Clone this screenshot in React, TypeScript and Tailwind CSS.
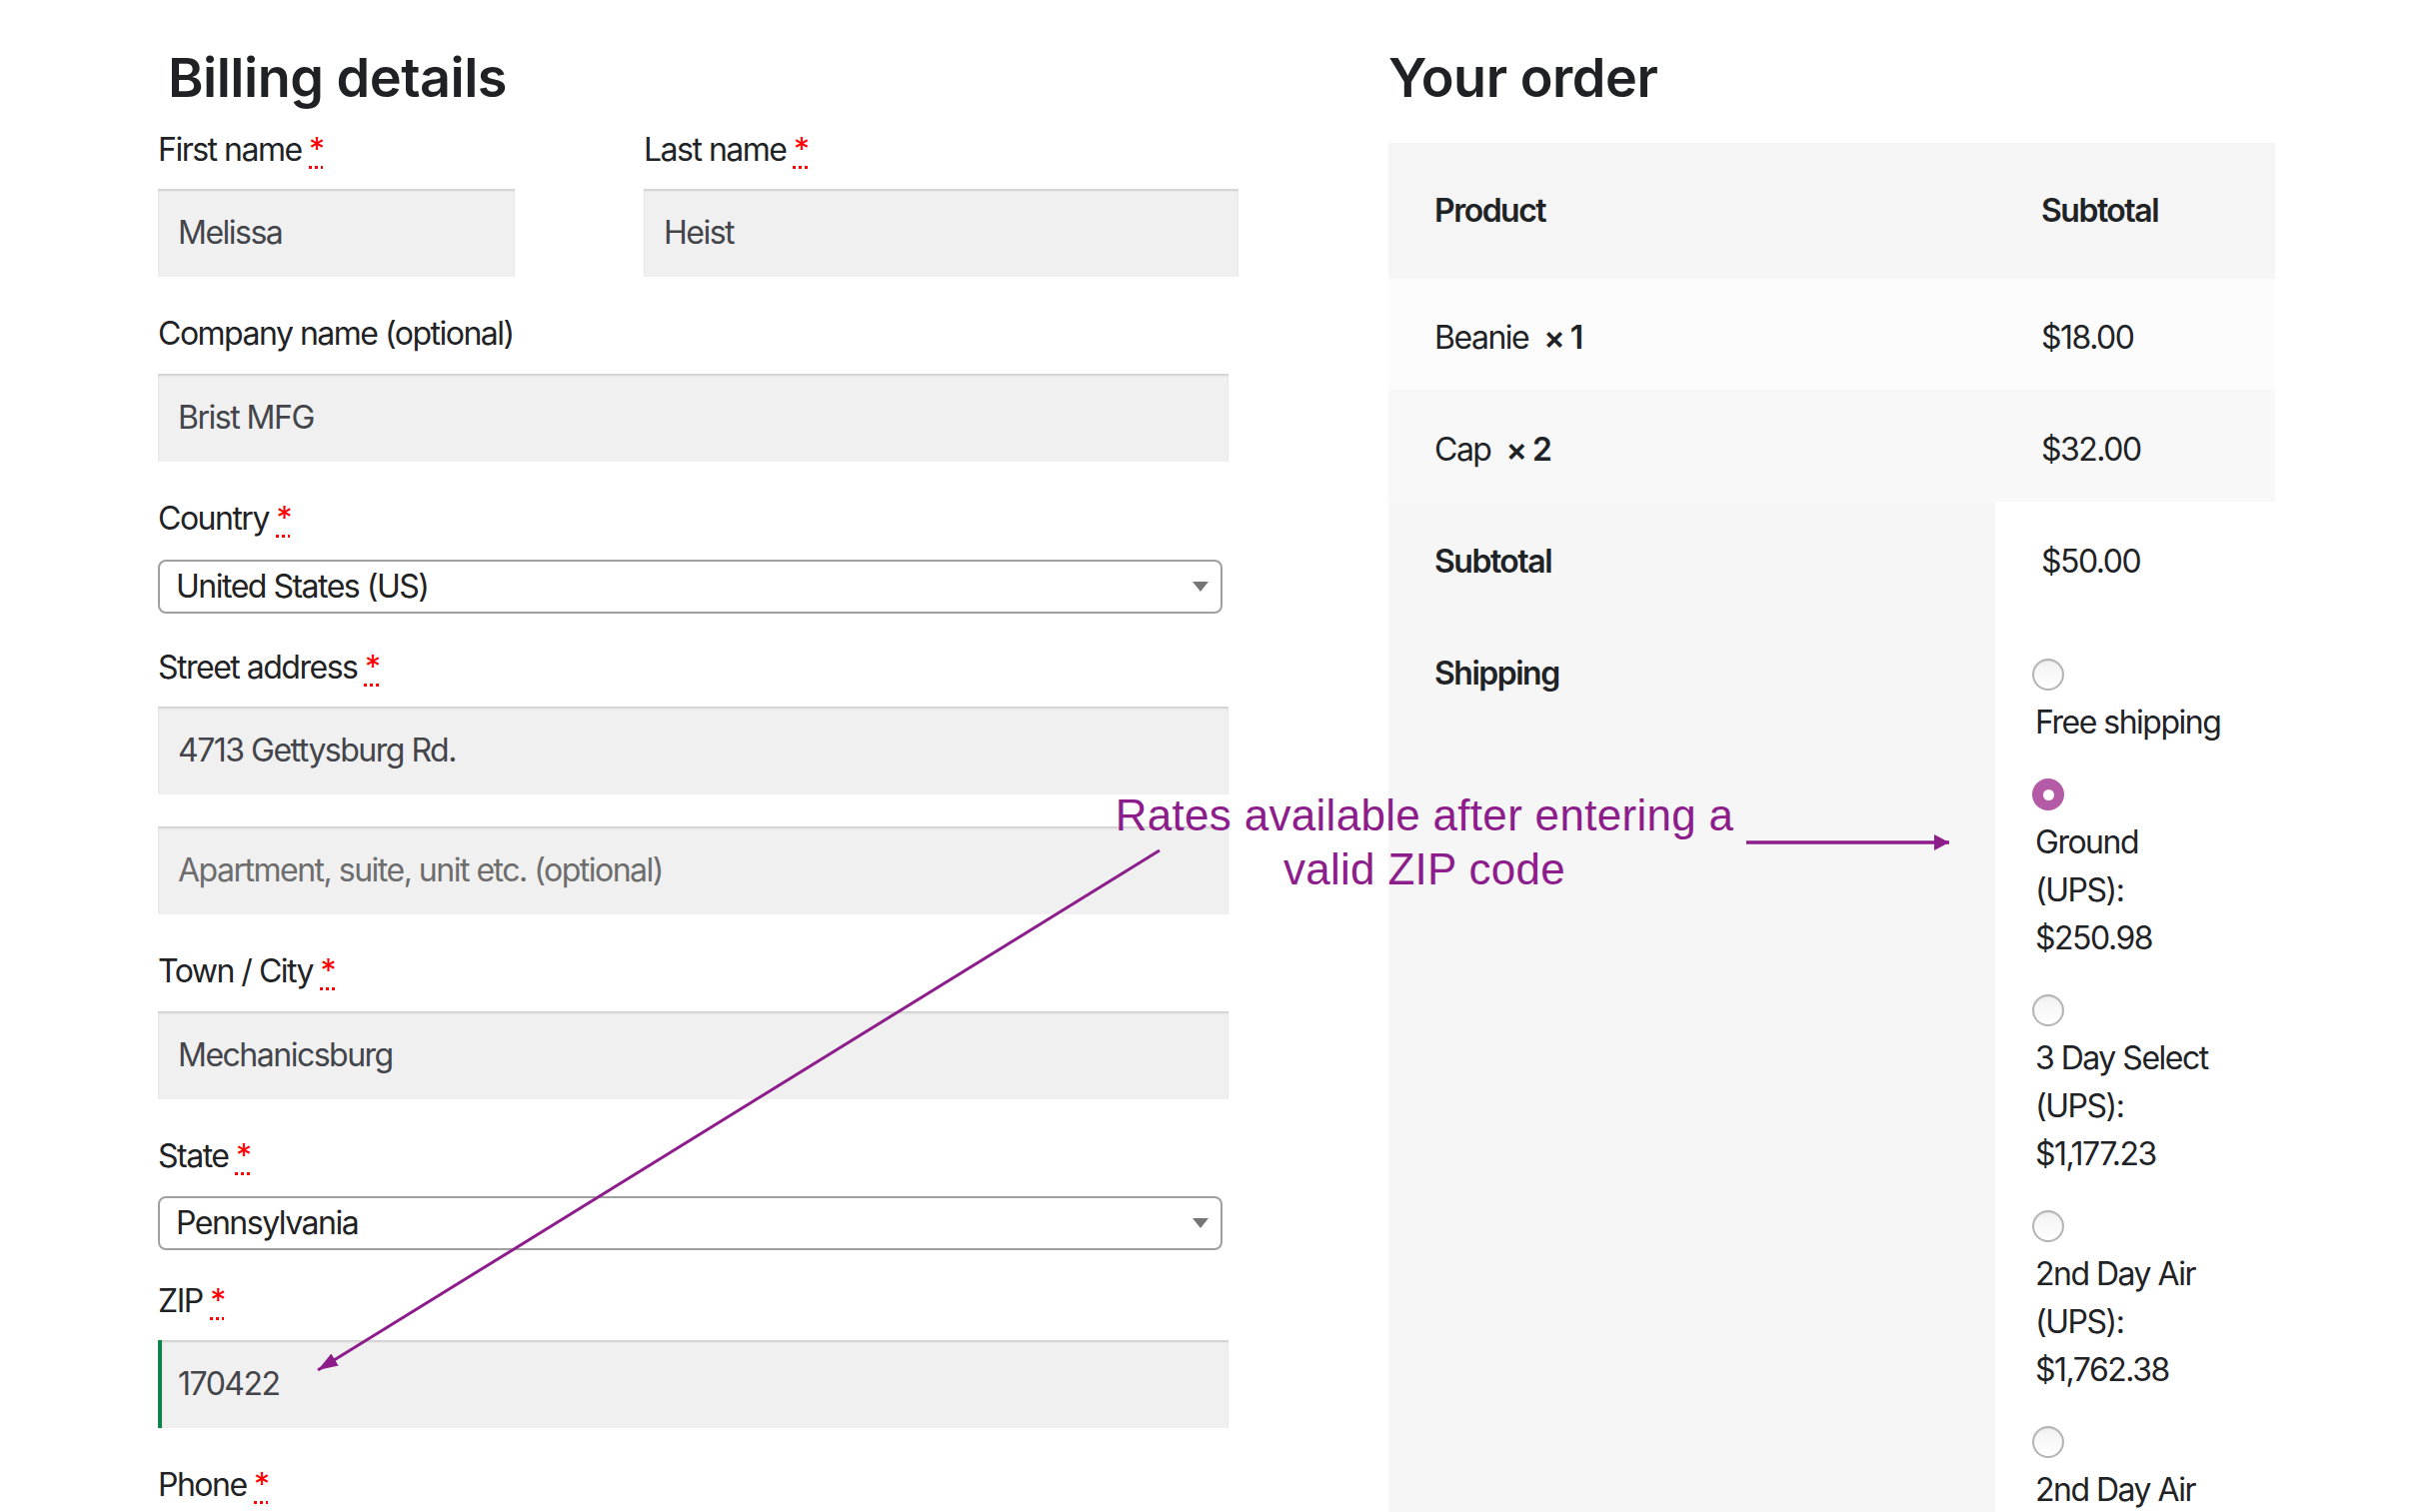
import React from "react";

function Req() {
  return (
    <abbr
      title="required"
      className="text-[#ff0000] underline decoration-dotted decoration-[3px] underline-offset-[5px]"
    >
      *
    </abbr>
  );
}

function Label({ children, req = true }: { children: React.ReactNode; req?: boolean }) {
  return (
    <div className="h-12 leading-[48px] text-[32px] text-[#1f2326] whitespace-nowrap">
      {children}
      {req ? (
        <>
          {" "}
          <Req />
        </>
      ) : null}
    </div>
  );
}

function Input({
  value,
  placeholder,
  valid,
  className = "",
}: {
  value?: string;
  placeholder?: string;
  valid?: boolean;
  className?: string;
}) {
  return (
    <div
      className={
        "h-[88px] flex items-center bg-[#f0f0f0] shadow-[inset_0_2px_2px_rgba(0,0,0,0.13)] text-[32px] " +
        (valid ? "border-l-4 border-[#0f834d] pl-[16px] " : "pl-[20px] ") +
        className
      }
    >
      {value ? (
        <span className="text-[#43454b]">{value}</span>
      ) : (
        <span className="text-[#6d6d6d]">{placeholder}</span>
      )}
    </div>
  );
}

function Select({ value, className = "" }: { value: string; className?: string }) {
  return (
    <div
      className={
        "h-[54px] flex items-center justify-between border-2 border-[#a0a0a0] rounded-[8px] pl-[16px] pr-[12px] bg-white text-[32px] text-[#222] " +
        className
      }
    >
      <span>{value}</span>
      <svg width="16" height="10" viewBox="0 0 16 10">
        <path d="M0 0 L16 0 L8 10 Z" fill="#767676" />
      </svg>
    </div>
  );
}

function Radio({ checked }: { checked?: boolean }) {
  return (
    <div className="h-12 flex items-center">
      {checked ? (
        <div className="w-8 h-8 -ml-[3px] rounded-full bg-[#b55aa6] flex items-center justify-center">
          <div className="w-[11px] h-[11px] rounded-full bg-white" />
        </div>
      ) : (
        <div className="w-8 h-8 -ml-[3px] rounded-full border-2 border-[#b4b4b4] bg-gradient-to-b from-[#f2f2f2] to-white shadow-[inset_0_1px_1px_rgba(0,0,0,0.08)]" />
      )}
    </div>
  );
}

function ShipOption({ checked, lines }: { checked?: boolean; lines: string[] }) {
  return (
    <div className="mb-[24px]">
      <Radio checked={checked} />
      {lines.map((l) => (
        <div key={l} className="h-12 leading-[48px] whitespace-nowrap">
          {l}
        </div>
      ))}
    </div>
  );
}

export default function App() {
  return (
    <div className="relative w-[2435px] h-[1513px] overflow-hidden bg-white font-['Inter',sans-serif] tracking-[-1.5px] text-[#1f2326]">
      <div className="flex items-start">
        {/* Billing column */}
        <div className="ml-[158px] w-[1081px] pt-[46px] flex flex-col">
          <h2 className="h-16 leading-[64px] text-[54px] font-semibold tracking-[-0.5px] pl-[10px] text-[#1f2125]">
            Billing details
          </h2>
          <div className="mt-4 flex">
            <div className="w-[357px] flex flex-col">
              <Label>First name</Label>
              <Input className="mt-[15px]" value="Melissa" />
            </div>
            <div className="ml-[129px] w-[595px] flex flex-col">
              <Label>Last name</Label>
              <Input className="mt-[15px]" value="Heist" />
            </div>
          </div>
          <div className="w-[1071px] flex flex-col">
            <div className="mt-[33px]">
              <Label req={false}>Company name (optional)</Label>
            </div>
            <Input className="mt-4" value="Brist MFG" />
            <div className="mt-[33px]">
              <Label>Country</Label>
            </div>
            <Select className="mt-[17px] mr-[6px]" value="United States (US)" />
            <div className="mt-[30px]">
              <Label>Street address</Label>
            </div>
            <Input className="mt-[15px]" value="4713 Gettysburg Rd." />
            <Input className="mt-[32px]" placeholder="Apartment, suite, unit etc. (optional)" />
            <div className="mt-[33px]">
              <Label>Town / City</Label>
            </div>
            <Input className="mt-4" value="Mechanicsburg" />
            <div className="mt-[33px]">
              <Label>State</Label>
            </div>
            <Select className="mt-4 mr-[6px]" value="Pennsylvania" />
            <div className="mt-[27px]">
              <Label>ZIP</Label>
            </div>
            <Input className="mt-[15px]" value="170422" valid />
            <div className="mt-[33px]">
              <Label>Phone</Label>
            </div>
          </div>
        </div>

        {/* Order column */}
        <div className="ml-[150px] w-[887px] pt-[46px] flex flex-col text-[32px]">
          <h2 className="h-16 leading-[64px] text-[54px] font-semibold tracking-[-0.5px] text-[#1f2125]">
            Your order
          </h2>
          <div className="mt-[33px] flex flex-col">
            <div className="h-[136px] flex items-center bg-[#f5f5f5] font-semibold">
              <div className="w-[607px] pl-[46px]">Product</div>
              <div className="pl-[46px]">Subtotal</div>
            </div>
            <div className="h-[111px] flex items-center pt-[6px] bg-[#fcfcfc]">
              <div className="w-[607px] pl-[46px]">
                Beanie&nbsp; <strong className="font-semibold">×&nbsp;1</strong>
              </div>
              <div className="pl-[46px]">$18.00</div>
            </div>
            <div className="h-[112px] flex items-center pt-[8px] bg-[#f8f8f8]">
              <div className="w-[607px] pl-[46px]">
                Cap&nbsp; <strong className="font-semibold">×&nbsp;2</strong>
              </div>
              <div className="pl-[46px]">$32.00</div>
            </div>
            <div className="h-[112px] flex">
              <div className="w-[607px] pl-[46px] flex items-center pt-[8px] bg-[#f6f6f6] font-semibold">
                Subtotal
              </div>
              <div className="flex-1 pl-[46px] flex items-center pt-[8px] bg-white">$50.00</div>
            </div>
            <div className="flex h-[900px]">
              <div className="w-[607px] pl-[46px] pt-[36px] bg-[#f6f6f6] font-semibold leading-[48px]">
                Shipping
              </div>
              <div className="flex-1 pl-[40px] pt-[37px] bg-white">
                <ShipOption lines={["Free shipping"]} />
                <ShipOption checked lines={["Ground", "(UPS):", "$250.98"]} />
                <ShipOption lines={["3 Day Select", "(UPS):", "$1,177.23"]} />
                <ShipOption lines={["2nd Day Air", "(UPS):", "$1,762.38"]} />
                <ShipOption lines={["2nd Day Air"]} />
              </div>
            </div>
          </div>
        </div>
      </div>

      {/* Annotation overlay */}
      <svg
        className="absolute left-0 top-0 pointer-events-none"
        width="2435"
        height="1513"
        viewBox="0 0 2435 1513"
      >
        <defs>
          <marker
            id="headA"
            markerUnits="userSpaceOnUse"
            markerWidth="22"
            markerHeight="14"
            refX="20"
            refY="7"
            orient="auto"
          >
            <path d="M0 0 L20 7 L0 14 Z" fill="#8c1d8a" />
          </marker>
          <marker
            id="headB"
            markerUnits="userSpaceOnUse"
            markerWidth="16"
            markerHeight="16"
            refX="15"
            refY="8"
            orient="auto"
          >
            <path d="M0 0 L15 8 L0 16 Z" fill="#8c1d8a" />
          </marker>
        </defs>
        <line x1="1160" y1="851" x2="318" y2="1371" stroke="#8c1d8a" strokeWidth="3" markerEnd="url(#headA)" />
        <line x1="1747" y1="843" x2="1950" y2="843" stroke="#8c1d8a" strokeWidth="3.3" markerEnd="url(#headB)" />
      </svg>
      <div className="absolute left-[1100px] top-[789px] w-[650px] text-center text-[44px] leading-[54px] tracking-[0.3px] text-[#8c1d8a] font-['Liberation_Sans',Arial,sans-serif] pointer-events-none">
        Rates available after entering a
        <br />
        valid ZIP code
      </div>
    </div>
  );
}
